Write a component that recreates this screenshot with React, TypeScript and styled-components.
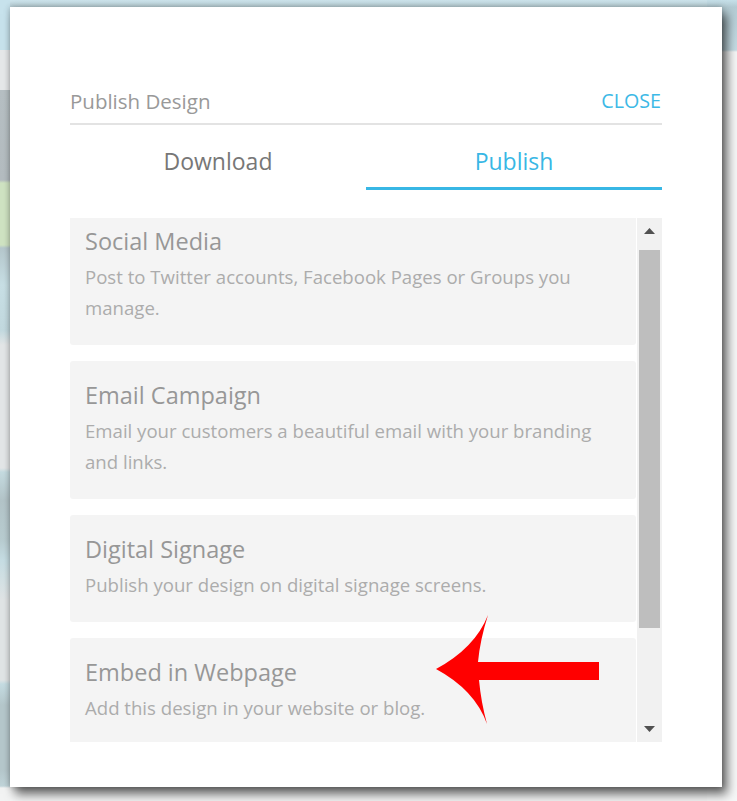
import React from "react";
import styled, { createGlobalStyle } from "styled-components";

const GlobalStyle = createGlobalStyle`
  html, body {
    margin: 0;
    padding: 0;
    background: #f4f5f5;
  }
  * { box-sizing: border-box; }
`;

const FONT = `"Open Sans", "Noto Sans", Arial, sans-serif`;

const Page = styled.div`
  width: 737px;
  height: 801px;
  padding: 7px 15px 14px 10px;
  font-family: ${FONT};
  background:
    linear-gradient(
      to bottom,
      #c7e2ec 0px,
      #c7e2ec 50px,
      #e6e8e9 50px,
      #e6e8e9 90px,
      #b6bfc3 90px,
      #b4bcc0 180px,
      #cfe3c2 183px,
      #cfe3c2 245px,
      #b5c7cc 248px,
      #c8dfe5 285px,
      #c2d9df 330px,
      #e3e6e7 345px,
      #e3e6e7 468px,
      #c5dbe0 472px,
      #b3c4c8 500px,
      #b8ccd0 540px,
      #c6dde3 560px,
      #e0e4e5 600px,
      #e0e4e5 680px,
      #c5dce2 684px,
      #b5c7cb 705px,
      #b5c7cb 770px,
      #c0d4d9 786px,
      #f2f3f3 788px
    ) left top / 10px 100% no-repeat,
    linear-gradient(to bottom, #c6e0e9 0px, #b4ccd4 7px, #c6dde5 50px, #f6f7f7 52px) right top / 30px 100% no-repeat,
    linear-gradient(to bottom, #cde4ec 0px, #b9cfd6 7px) left top / 100% 7px no-repeat,
    #f4f5f5;
`;

const Modal = styled.div`
  position: relative;
  height: 780px;
  background: #ffffff;
  padding: 79px 60px 45px 60px;
  box-shadow: 5px 7px 10px rgba(0, 0, 0, 0.6), 0 0 6px rgba(0, 0, 0, 0.25);
  display: flex;
  flex-direction: column;
`;

const Header = styled.div`
  display: flex;
  justify-content: space-between;
  align-items: center;
  border-bottom: 2px solid #e3e3e3;
  padding-bottom: 7px;
`;

const HeaderTitle = styled.div`
  font-size: 20.5px;
  line-height: 30px;
  color: #999999;
`;

const CloseButton = styled.div`
  font-size: 19.7px;
  line-height: 30px;
  color: #3db9e6;
  text-transform: uppercase;
  margin-right: 1px;
`;

const Tabs = styled.div`
  display: grid;
  grid-template-columns: 1fr 1fr;
`;

const Tab = styled.div<{ $active?: boolean }>`
  text-align: center;
  font-size: 23px;
  line-height: 30px;
  padding: 21px 0 11px;
  color: ${(p) => (p.$active ? "#38b7e5" : "#777777")};
  border-bottom: 3px solid ${(p) => (p.$active ? "#38b7e5" : "transparent")};
`;

const ListArea = styled.div`
  margin-top: 28px;
  height: 524px;
  display: flex;
`;

const Viewport = styled.div`
  flex: 1;
  overflow: hidden;
  padding-right: 1px;
`;

const ListInner = styled.div`
  margin-top: -11px;
  display: flex;
  flex-direction: column;
  gap: 16px;
`;

const Card = styled.div`
  background: #f4f4f4;
  border-radius: 3px;
  padding: 18px 20px 22px 15px;
`;

const CardTitle = styled.div`
  font-size: 23.5px;
  line-height: 32px;
  color: #979797;
  margin-bottom: 4px;
`;

const CardDesc = styled.div`
  font-size: 18.6px;
  line-height: 31px;
  color: #acacac;
`;

const Scrollbar = styled.div`
  width: 25px;
  background: #f1f1f1;
  display: flex;
  flex-direction: column;
`;

const ScrollButton = styled.div`
  height: 26px;
  display: flex;
  align-items: center;
  justify-content: center;
`;

const Track = styled.div`
  flex: 1;
  padding: 6px 2px 0 2px;
`;

const Thumb = styled.div`
  height: 378px;
  background: #bebebe;
`;

const Pointer = styled.svg`
  position: absolute;
  left: 420px;
  top: 603px;
`;

const cards = [
  {
    title: "Social Media",
    desc: "Post to Twitter accounts, Facebook Pages or Groups you manage.",
  },
  {
    title: "Email Campaign",
    desc: "Email your customers a beautiful email with your branding and links.",
  },
  {
    title: "Digital Signage",
    desc: "Publish your design on digital signage screens.",
  },
  {
    title: "Embed in Webpage",
    desc: "Add this design in your website or blog.",
  },
];

export default function App() {
  return (
    <>
      <GlobalStyle />
      <Page>
        <Modal>
          <Header>
            <HeaderTitle>Publish Design</HeaderTitle>
            <CloseButton>Close</CloseButton>
          </Header>
          <Tabs>
            <Tab>Download</Tab>
            <Tab $active>Publish</Tab>
          </Tabs>
          <ListArea>
            <Viewport>
              <ListInner>
                {cards.map((c) => (
                  <Card key={c.title}>
                    <CardTitle>{c.title}</CardTitle>
                    <CardDesc>{c.desc}</CardDesc>
                  </Card>
                ))}
              </ListInner>
            </Viewport>
            <Scrollbar>
              <ScrollButton>
                <svg width="11" height="6" viewBox="0 0 11 6">
                  <path d="M5.5 0 L11 6 L0 6 Z" fill="#505050" />
                </svg>
              </ScrollButton>
              <Track>
                <Thumb />
              </Track>
              <ScrollButton>
                <svg width="11" height="6" viewBox="0 0 11 6">
                  <path d="M0 0 L11 0 L5.5 6 Z" fill="#505050" />
                </svg>
              </ScrollButton>
            </Scrollbar>
          </ListArea>
          <Pointer width="175" height="120" viewBox="0 0 175 120">
            <path
              d="M6 59 Q45 38 58 5 Q50 30 48 52 L169 52 L169 70 L49 70 Q51 92 57 114 Q45 80 6 59 Z"
              fill="#ff0000"
            />
          </Pointer>
        </Modal>
      </Page>
    </>
  );
}
